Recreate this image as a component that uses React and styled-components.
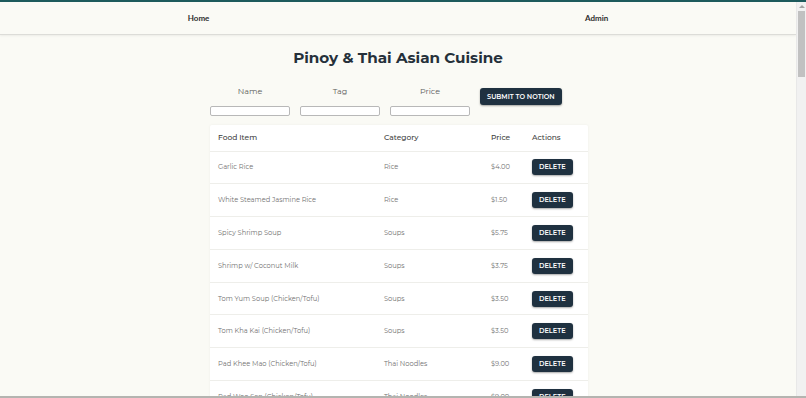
import React from "react";
import styled, { createGlobalStyle } from "styled-components";

const GlobalStyle = createGlobalStyle`
  html, body {
    margin: 0;
    padding: 0;
    overflow: hidden;
    background: #fafaf5;
  }
  * {
    box-sizing: border-box;
  }
`;

const Frame = styled.div`
  height: 100vh;
  display: flex;
  flex-direction: column;
  border-top: 2px solid #1d5a5c;
  border-bottom: 2px solid #b4b4b0;
  font-family: "Montserrat", "Inter", "Open Sans", sans-serif;
`;

const Body = styled.div`
  flex: 1;
  display: flex;
  min-height: 0;
`;

const Main = styled.div`
  flex: 1;
  overflow: hidden;
`;

const Scrollbar = styled.div`
  width: 10px;
  background: #f1f1f1;
  display: flex;
  flex-direction: column;
  align-items: center;
  border-left: 1px solid #e8e8e8;

  .arrow {
    margin-top: 3px;
    width: 0;
    height: 0;
    border-left: 3px solid transparent;
    border-right: 3px solid transparent;
    border-bottom: 3px solid #a3a3a3;
  }

  .thumb {
    margin-top: 3px;
    width: 7px;
    height: 66px;
    background: #c1c1c1;
  }
`;

const Nav = styled.nav`
  height: 33px;
  display: flex;
  justify-content: space-around;
  align-items: center;
  border-bottom: 1px solid #dcdcd8;
  box-shadow: 0 1px 2px rgba(0, 0, 0, 0.06);

  a {
    font-family: "Lato", sans-serif;
    font-weight: 700;
    font-size: 8px;
    color: #2e2e2e;
    text-decoration: none;
  }
`;

const Title = styled.h1`
  margin: 13px 0 0;
  text-align: center;
  font-size: 15.2px;
  font-weight: 700;
  color: #25303a;
  line-height: 20px;
`;

const Content = styled.div`
  width: 378px;
  margin: 0 auto;
  position: relative;
  left: 1px;
`;

const Form = styled.form`
  display: flex;
  gap: 10px;
  align-items: flex-start;
  margin-top: 18px;
`;

const Field = styled.label`
  display: flex;
  flex-direction: column;
  align-items: center;
  gap: 10px;
  font-size: 8px;
  color: #5a5a5a;
  line-height: 10px;

  input {
    width: 80px;
    height: 10px;
    border: 1px solid #b8b8b8;
    border-radius: 2px;
    background: #fff;
    padding: 0;
  }
`;

const Button = styled.button`
  font-family: inherit;
  background: #1f3140;
  color: #fff;
  border: none;
  border-radius: 3px;
  box-shadow: 0 1px 2px rgba(0, 0, 0, 0.35);
  font-size: 6.6px;
  font-weight: 600;
  text-transform: uppercase;
  padding: 0 7px;
  height: ${(p) => (p.$small ? "16px" : "17px")};
  cursor: pointer;
  margin-top: ${(p) => (p.$top ? "2px" : "0")};
`;

const Card = styled.div`
  margin-top: 9px;
  background: #fff;
  border-radius: 2px;
  box-shadow: 0 0 3px rgba(0, 0, 0, 0.05);
`;

const Table = styled.table`
  width: 100%;
  border-collapse: collapse;
  table-layout: fixed;

  th {
    text-align: left;
    font-weight: 500;
    font-size: 7.5px;
    color: #3e3e3e;
    height: 26px;
    padding: 0 8px;
    border-bottom: 1px solid #eeeeea;
  }

  td {
    font-size: 6.7px;
    color: #707070;
    height: 32.8px;
    padding: 0 8px;
    border-bottom: 1px solid #eeeeea;
  }
`;

const items = [
  ["Garlic Rice", "Rice", "$4.00"],
  ["White Steamed Jasmine Rice", "Rice", "$1.50"],
  ["Spicy Shrimp Soup", "Soups", "$5.75"],
  ["Shrimp w/ Coconut Milk", "Soups", "$3.75"],
  ["Tom Yum Soup (Chicken/Tofu)", "Soups", "$3.50"],
  ["Tom Kha Kai (Chicken/Tofu)", "Soups", "$3.50"],
  ["Pad Khee Mao (Chicken/Tofu)", "Thai Noodles", "$9.00"],
  ["Pad Woo Sen (Chicken/Tofu)", "Thai Noodles", "$9.00"],
  ["Pad Thai (Chicken/Tofu)", "Thai Noodles", "$9.00"],
];

const App = () => {
  return (
    <>
      <GlobalStyle />
      <Frame>
        <Body>
          <Main>
            <Nav>
              <a href="#">Home</a>
              <a href="#">Admin</a>
            </Nav>
            <Title>Pinoy &amp; Thai Asian Cuisine</Title>
            <Content>
              <Form onSubmit={(e) => e.preventDefault()}>
                <Field>
                  Name
                  <input type="text" />
                </Field>
                <Field>
                  Tag
                  <input type="text" />
                </Field>
                <Field>
                  Price
                  <input type="text" />
                </Field>
                <Button $top type="submit">Submit to Notion</Button>
              </Form>
              <Card>
                <Table>
                  <colgroup>
                    <col style={{ width: "166px" }} />
                    <col style={{ width: "107px" }} />
                    <col style={{ width: "41px" }} />
                    <col />
                  </colgroup>
                  <thead>
                    <tr>
                      <th>Food Item</th>
                      <th>Category</th>
                      <th>Price</th>
                      <th>Actions</th>
                    </tr>
                  </thead>
                  <tbody>
                    {items.map(([name, cat, price]) => (
                      <tr key={name}>
                        <td>{name}</td>
                        <td>{cat}</td>
                        <td>{price}</td>
                        <td>
                          <Button $small>Delete</Button>
                        </td>
                      </tr>
                    ))}
                  </tbody>
                </Table>
              </Card>
            </Content>
          </Main>
          <Scrollbar>
            <div className="arrow" />
            <div className="thumb" />
          </Scrollbar>
        </Body>
      </Frame>
    </>
  );
};

export default App;
